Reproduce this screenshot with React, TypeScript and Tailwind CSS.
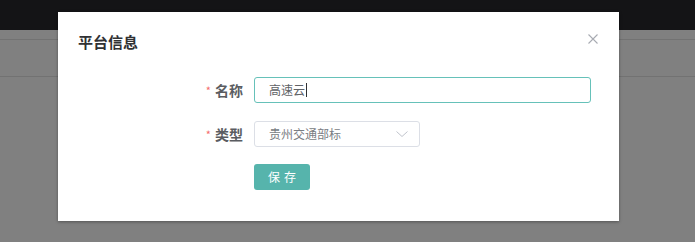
import React from "react";

export default function App() {
  const font = { fontFamily: '"Noto Sans CJK SC", "Noto Sans", sans-serif' };
  return (
    <div className="relative w-[695px] h-[242px] overflow-hidden bg-[#808080]" style={font}>
      <div className="h-[30px] bg-[#141416]" />
      <div className="h-[10px] border-b border-[#727272]" />
      <div className="h-[37px] border-b border-[#727272]" />

      <div className="absolute left-[58px] top-[12px] w-[561px] h-[209px] bg-white shadow-[0_1px_3px_rgba(0,0,0,0.35)] flex flex-col">
        <div className="pt-[18px] px-[20px] h-[42px] flex">
          <span className="text-[15px] leading-[23px] font-bold text-[#303133]">平台信息</span>
        </div>
        <button className="absolute right-[21px] top-[22px] w-[10px] h-[10px]" aria-label="close">
          <svg width="10" height="10" viewBox="0 0 10 10" fill="none" stroke="#a8abb2" strokeWidth="1.1">
            <path d="M0.5 0.5 L9.5 9.5 M9.5 0.5 L0.5 9.5" />
          </svg>
        </button>

        <div className="mt-[23px] flex flex-col gap-[18px] pl-[20px]">
          <div className="flex items-center h-[26px]">
            <label className="w-[176px] pr-[11px] flex justify-end items-center text-[14px] font-bold text-[#5a5c61]">
              <span className="text-[#f56c6c] text-[11px] mr-[4px] font-normal">*</span>名称
            </label>
            <div className="w-[337px] h-[26px] rounded-[3px] border border-[#66c1b9] flex items-center pl-[14px] text-[12px] text-[#606266]">
              高速云<span className="ml-[1px] w-px h-[14px] bg-[#303133]" />
            </div>
          </div>
          <div className="flex items-center h-[26px]">
            <label className="w-[176px] pr-[11px] flex justify-end items-center text-[14px] font-bold text-[#5a5c61]">
              <span className="text-[#f56c6c] text-[11px] mr-[4px] font-normal">*</span>类型
            </label>
            <div className="w-[166px] h-[26px] rounded-[3px] border border-[#dcdfe6] flex items-center justify-between pl-[14px] pr-[11px] text-[12px] text-[#7a7d83]">
              <span>贵州交通部标</span>
              <svg width="12" height="6" viewBox="0 0 12 6" fill="none" stroke="#c0c4cc" strokeWidth="1">
                <path d="M0.5 0.5 L6 5.5 L11.5 0.5" />
              </svg>
            </div>
          </div>
          <div className="flex items-center h-[26px] -mt-[1px]">
            <div className="w-[176px]" />
            <button className="w-[56px] h-[26px] rounded-[3px] bg-[#56b4ac] text-white text-[12px] flex items-center justify-center gap-[4px]">
              <span>保</span>
              <span>存</span>
            </button>
          </div>
        </div>
      </div>
    </div>
  );
}
